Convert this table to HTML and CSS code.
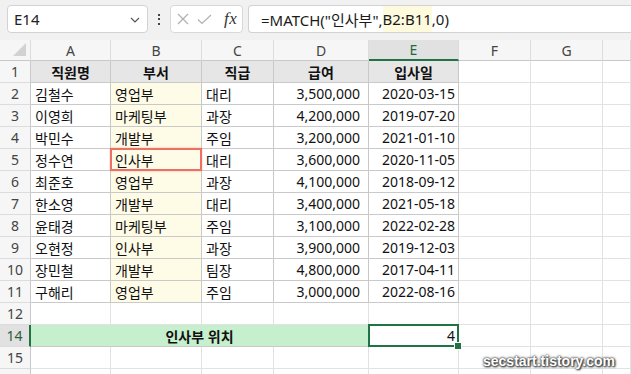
FILE: index.html
```html
<!DOCTYPE html>
<html lang="ko">
<head>
<meta charset="utf-8">
<title>MATCH</title>
<link rel="stylesheet" href="styles.css">
</head>
<body>
<div class="topbar">
  <div class="namebox">
    <span class="nb-text">E14</span>
    <svg class="chev" width="10" height="6" viewBox="0 0 10 6"><polyline points="1,1 5,5 9,1" fill="none" stroke="#555" stroke-width="1.2"/></svg>
  </div>
  <div class="dots"><i></i><i></i><i></i></div>
  <div class="fxbox">
    <svg class="ico-x" width="12" height="12" viewBox="0 0 12 12"><path d="M1 1 L11 11 M11 1 L1 11" stroke="#b0b0b0" stroke-width="1.2" fill="none"/></svg>
    <svg class="ico-ok" width="15" height="11" viewBox="0 0 15 11"><polyline points="1,5.5 5,9.5 14,1" fill="none" stroke="#b0b0b0" stroke-width="1.2"/></svg>
    <span class="fx">fx</span>
  </div>
  <div class="formula"><span>=MATCH("인사부",</span><span class="rng">B2:B11</span><span>,0)</span></div>
</div>

<div class="sheet">
  <div class="ch corner"><svg width="13" height="13" viewBox="0 0 13 13"><polygon points="13,0 13,13 0,13" fill="#d2d2d2"/></svg></div>
  <div class="ch">A</div><div class="ch">B</div><div class="ch">C</div><div class="ch">D</div><div class="ch on">E</div><div class="ch">F</div><div class="ch">G</div><div class="ch">&nbsp;</div>

  <div class="rh">1</div>
  <div class="c t hd">직원명</div><div class="c t hd">부서</div><div class="c t hd">직급</div><div class="c t hd">급여</div><div class="c t hd">입사일</div><div class="c"></div><div class="c"></div><div class="c"></div>

  <div class="rh">2</div>
  <div class="c t">김철수</div><div class="c t y">영업부</div><div class="c t">대리</div><div class="c t r">3,500,000</div><div class="c t dt">2020-03-15</div><div class="c"></div><div class="c"></div><div class="c"></div>

  <div class="rh">3</div>
  <div class="c t">이영희</div><div class="c t y">마케팅부</div><div class="c t">과장</div><div class="c t r">4,200,000</div><div class="c t dt">2019-07-20</div><div class="c"></div><div class="c"></div><div class="c"></div>

  <div class="rh">4</div>
  <div class="c t">박민수</div><div class="c t y">개발부</div><div class="c t">주임</div><div class="c t r">3,200,000</div><div class="c t dt">2021-01-10</div><div class="c"></div><div class="c"></div><div class="c"></div>

  <div class="rh">5</div>
  <div class="c t">정수연</div><div class="c t y hit">인사부</div><div class="c t">대리</div><div class="c t r">3,600,000</div><div class="c t dt">2020-11-05</div><div class="c"></div><div class="c"></div><div class="c"></div>

  <div class="rh">6</div>
  <div class="c t">최준호</div><div class="c t y">영업부</div><div class="c t">과장</div><div class="c t r">4,100,000</div><div class="c t dt">2018-09-12</div><div class="c"></div><div class="c"></div><div class="c"></div>

  <div class="rh">7</div>
  <div class="c t">한소영</div><div class="c t y">개발부</div><div class="c t">대리</div><div class="c t r">3,400,000</div><div class="c t dt">2021-05-18</div><div class="c"></div><div class="c"></div><div class="c"></div>

  <div class="rh">8</div>
  <div class="c t">윤태경</div><div class="c t y">마케팅부</div><div class="c t">주임</div><div class="c t r">3,100,000</div><div class="c t dt">2022-02-28</div><div class="c"></div><div class="c"></div><div class="c"></div>

  <div class="rh">9</div>
  <div class="c t">오현정</div><div class="c t y">인사부</div><div class="c t">과장</div><div class="c t r">3,900,000</div><div class="c t dt">2019-12-03</div><div class="c"></div><div class="c"></div><div class="c"></div>

  <div class="rh">10</div>
  <div class="c t">장민철</div><div class="c t y">개발부</div><div class="c t">팀장</div><div class="c t r">4,800,000</div><div class="c t dt">2017-04-11</div><div class="c"></div><div class="c"></div><div class="c"></div>

  <div class="rh">11</div>
  <div class="c t">구해리</div><div class="c t y">영업부</div><div class="c t">주임</div><div class="c t r">3,000,000</div><div class="c t dt">2022-08-16</div><div class="c"></div><div class="c"></div><div class="c"></div>

  <div class="rh">12</div>
  <div class="c"></div><div class="c"></div><div class="c"></div><div class="c"></div><div class="c"></div><div class="c"></div><div class="c"></div><div class="c"></div>

  <div class="rh on">14</div>
  <div class="c g span4">인사부 위치</div><div class="c r sel">4</div><div class="c"></div><div class="c"></div><div class="c"></div>

  <div class="rh">15</div>
  <div class="c"></div><div class="c"></div><div class="c"></div><div class="c"></div><div class="c"></div><div class="c"></div><div class="c"></div><div class="c"></div>

  <div class="rh"></div>
  <div class="c"></div><div class="c"></div><div class="c"></div><div class="c"></div><div class="c"></div><div class="c"></div><div class="c"></div><div class="c"></div>
</div>

<div class="watermark">secstart.tistory.com</div>
</body>
</html>
```

FILE: styles.css
```css
* { box-sizing: border-box; }

body {
  margin: 0;
  width: 631px;
  height: 374px;
  overflow: hidden;
  position: relative;
  background: #fff;
  font-family: "Noto Sans", "Noto Sans CJK KR", sans-serif;
  color: #111;
}

/* ---------- top bar ---------- */
.topbar {
  height: 40px;
  background: #f1f1f1;
  display: flex;
  align-items: flex-start;
  padding: 5px 0 0 7px;
}

.namebox {
  width: 141px;
  height: 28px;
  background: #fff;
  border: 1px solid #d2d2d2;
  border-radius: 4px;
  display: flex;
  align-items: center;
  justify-content: space-between;
  padding: 0 7px 0 6px;
}

.nb-text {
  font-size: 15px;
  color: #222;
}

.chev { margin-top: 2px; }

.dots {
  width: 22px;
  height: 28px;
  display: flex;
  flex-direction: column;
  align-items: center;
  justify-content: center;
  gap: 2.5px;
}

.dots i {
  display: block;
  width: 2px;
  height: 2px;
  background: #444;
}

.fxbox {
  width: 73px;
  height: 28px;
  background: #fff;
  border: 1px solid #d8d8d8;
  border-radius: 4px;
  display: flex;
  align-items: center;
  padding-left: 6px;
}

.ico-ok { margin-left: 8px; }

.fx {
  margin-left: 12px;
  font-family: "Liberation Serif", serif;
  font-style: italic;
  font-size: 17px;
  color: #333;
  letter-spacing: 0.5px;
}

.formula {
  flex: 1;
  margin-left: 5px;
  height: 28px;
  background: #fff;
  border: 1px solid #d2d2d2;
  border-right: none;
  border-radius: 4px 0 0 4px;
  padding-left: 12px;
  display: flex;
  align-items: stretch;
  font-size: 15px;
  color: #1a1a1a;
}

.formula span {
  display: flex;
  align-items: center;
}

.rng { background: #fdfade; }

/* ---------- sheet ---------- */
.sheet {
  display: grid;
  grid-template-columns: 31px 80px 91px 72px 95px 90px 72px 72px 28px;
  grid-template-rows: 21px;
  grid-auto-rows: 22px;
}

.ch {
  background: #f6f6f6;
  border-right: 1px solid #dcdcdc;
  border-bottom: 1px solid #c9c9c9;
  display: flex;
  align-items: center;
  justify-content: center;
  font-size: 14px;
  color: #444;
}

.ch.on {
  background: #e1e1e1;
  color: #1d6b3f;
  border-bottom: 2px solid #217346;
}

.corner {
  justify-content: flex-end;
  align-items: flex-end;
  padding: 0 4px 4px 0;
}

.rh {
  background: #f6f6f6;
  border-right: 1px solid #c9c9c9;
  border-bottom: 1px solid #dcdcdc;
  display: flex;
  align-items: center;
  justify-content: center;
  font-size: 14px;
  color: #444;
}

.rh.on {
  background: #e1e1e1;
  color: #2c5f40;
  border-right: 2px solid #217346;
}

.c {
  border-right: 1px solid #e2e2e2;
  border-bottom: 1px solid #e2e2e2;
  display: flex;
  align-items: center;
  padding: 0 4px;
  font-size: 14px;
  white-space: nowrap;
  position: relative;
}

.t { border-color: #c9c9c9; }

.hd {
  background: #e6e6e6;
  font-weight: bold;
  justify-content: center;
}

.y { background: #fefbe6; }

.r {
  justify-content: flex-end;
  padding-right: 8px;
}

.dt {
  justify-content: flex-end;
  padding-right: 3px;
}

.hit::after {
  content: "";
  position: absolute;
  left: -1px;
  top: -1px;
  right: -1px;
  bottom: -1px;
  border: 2px solid #ee6f66;
  box-shadow: 0 0 2px rgba(238, 111, 102, 0.45);
  z-index: 2;
}

.span4 {
  grid-column: span 4;
  justify-content: center;
  font-weight: bold;
}

.g {
  background: #c6efce;
  border-color: #c9c9c9;
}

.sel { padding-right: 3px; }

.sel::after {
  content: "";
  position: absolute;
  left: -1px;
  top: -1px;
  right: -1px;
  bottom: -1px;
  border: 2px solid #217346;
  z-index: 2;
}

.sel::before {
  content: "";
  position: absolute;
  right: -4px;
  bottom: -4px;
  width: 6px;
  height: 6px;
  background: #217346;
  border: 1px solid #fff;
  box-sizing: content-box;
  z-index: 3;
}

/* ---------- watermark ---------- */
.watermark {
  position: absolute;
  right: 16px;
  bottom: 5px;
  font-family: "Liberation Sans", sans-serif;
  font-weight: bold;
  font-size: 14px;
  color: #fff;
  text-shadow: 0 0 2px #333, 0 0 3px #444, 1px 1px 2px #222;
}
```
